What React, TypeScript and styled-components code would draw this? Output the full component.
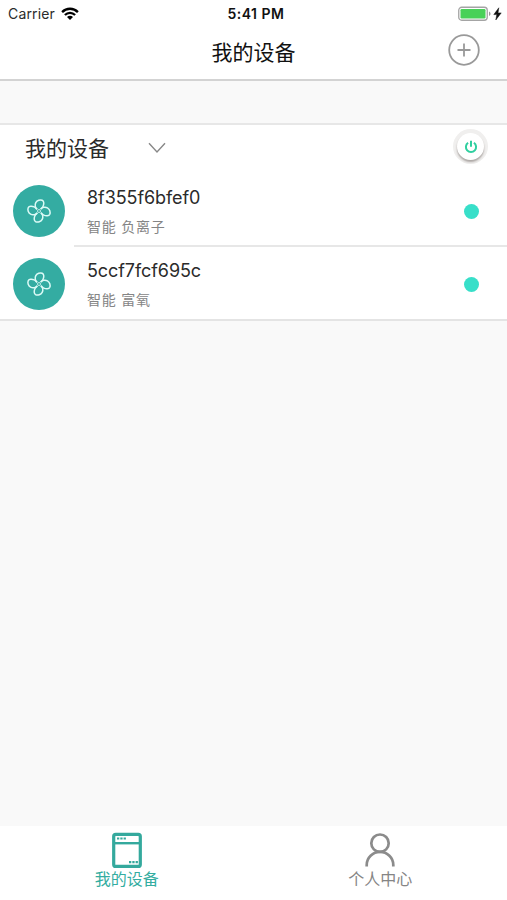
import React from "react";
import styled, { createGlobalStyle } from "styled-components";

const GlobalStyle = createGlobalStyle`
  * { box-sizing: border-box; }
  body {
    margin: 0;
    background: #f9f9f9;
    font-family: Inter, "Noto Sans CJK SC", sans-serif;
    color: #2b2b2b;
  }
`;

const Screen = styled.div`
  width: 100%;
  height: 900px;
  display: flex;
  flex-direction: column;
  background: #f9f9f9;
  overflow: hidden;
`;

const StatusBar = styled.header`
  height: 27px;
  padding: 0 5px 0 8px;
  display: grid;
  grid-template-columns: 1fr auto 1fr;
  align-items: center;
  background: #fff;
`;

const Carrier = styled.div`
  display: flex;
  align-items: center;
  gap: 6px;
  font-size: 14px;
  line-height: 27px;
  letter-spacing: 0.15px;
`;

const Clock = styled.div`
  font-size: 14px;
  font-weight: 600;
  line-height: 27px;
  letter-spacing: 0.5px;
  padding-left: 2px;
  color: #111;
`;

const Power = styled.div`
  display: flex;
  align-items: center;
  justify-content: flex-end;
  gap: 2px;
`;

const NavBar = styled.nav`
  height: 54px;
  display: grid;
  grid-template-columns: 60px 1fr 60px;
  align-items: center;
  background: #fff;
  border-bottom: 2px solid #d3d3d3;
`;

const Title = styled.h1`
  grid-column: 2;
  margin: 0;
  text-align: center;
  font-size: 21px;
  font-weight: 400;
  line-height: 50px;
  color: #111;
`;

const IconButton = styled.button`
  width: 34px;
  height: 34px;
  padding: 0;
  border: 0;
  background: none;
  display: flex;
  margin-bottom: 6px;
`;

const Group = styled.section`
  margin-top: 42px;
  background: #fff;
  border-top: 2px solid #e7e7e7;
  border-bottom: 2px solid #e4e4e4;
`;

const GroupHeader = styled.div`
  height: 48px;
  padding: 0 22px 0 25px;
  display: flex;
  align-items: center;

  > svg { margin-bottom: 2px; }
`;

const GroupName = styled.h2`
  margin: 0 39px 0 0;
  font-size: 21px;
  line-height: 46px;
  font-weight: 400;
`;

const PowerButton = styled.button`
  width: 27px;
  height: 27px;
  margin: 0 1px 5px auto;
  padding: 0;
  border: 0;
  border-radius: 50%;
  background: #fff;
  display: flex;
  align-items: center;
  justify-content: center;
  box-shadow: 0 2px 2px rgba(90, 80, 75, 0.45), 0 0 0 4px #f0efee;
`;

const DeviceRow = styled.div`
  height: 73px;
  padding-left: 13px;
  display: flex;
  align-items: stretch;
`;

const Avatar = styled.div`
  flex: none;
  width: 52px;
  height: 52px;
  margin: 12px 9px 0 0;
  border-radius: 50%;
  background: #34aca2;
  display: flex;
  align-items: center;
  justify-content: center;
`;

const DeviceBody = styled.div<{ $divided: boolean }>`
  flex: 1;
  display: flex;
  align-items: flex-start;
  padding: 0 28px 0 13px;
  border-bottom: ${(p) => (p.$divided ? "2px solid #e7e7e7" : "0")};
  margin-bottom: ${(p) => (p.$divided ? "-1px" : "0")};
`;

const DeviceText = styled.div`
  flex: 1;
`;

const DeviceName = styled.div`
  padding-top: 12px;
  font-size: 18px;
  line-height: 25px;
  letter-spacing: -0.08px;
`;

const DeviceKind = styled.div`
  margin-top: 6px;
  font-size: 14px;
  line-height: 22px;
  letter-spacing: 0.75px;
  color: #858585;
`;

const OnlineDot = styled.span`
  width: 15px;
  height: 15px;
  margin-top: 30.5px;
  border-radius: 50%;
  background: #38dfc9;
`;

const TabBar = styled.footer`
  height: 74px;
  margin-top: auto;
  display: grid;
  grid-template-columns: 1fr 1fr;
  background: #fff;
`;

const Tab = styled.div<{ $active?: boolean }>`
  display: flex;
  flex-direction: column;
  align-items: center;
  padding-top: 6px;
  font-size: 16px;
  line-height: 20px;
  color: ${(p) => (p.$active ? "#34ada1" : "#858585")};

  svg { display: block; margin-bottom: 1px; }
`;

const WifiIcon = () => (
  <svg width="18" height="14" viewBox="0 0 18 14" fill="none" stroke="#000" strokeWidth="2.3">
    <path d="M1.1 5.1C5.5.6 12.5.6 16.9 5.1M3.9 8C6.8 5.1 11.2 5.1 14.1 8" />
    <path d="M6 10C7.7 8.3 10.3 8.3 12 10L9 13z" fill="#000" stroke="none" />
  </svg>
);

const BatteryIcon = () => (
  <svg width="33" height="16" viewBox="0 0 33 16">
    <rect x="0.75" y="1.25" width="28.5" height="13" rx="3" fill="#fff" stroke="#a4a4a4" strokeWidth="1.3" />
    <rect x="2.5" y="3" width="25" height="9.5" rx="1.2" fill="#48d158" />
    <path d="M31 5.5c2 .8 2 3.7 0 4.5z" fill="#999" />
  </svg>
);

const BoltIcon = () => (
  <svg width="9" height="14" viewBox="0 0 9 14">
    <path d="M5.8.8.8 7.6h3L2.8 13 8.2 5.9H5z" fill="#111" stroke="#111" strokeWidth="0.5" />
  </svg>
);

const AddIcon = () => (
  <svg width="34" height="34" viewBox="0 0 34 34" fill="none" stroke="#999" strokeWidth="1.8">
    <circle cx="17" cy="17" r="14.8" />
    <path d="M10.5 17h13M17 10.5v13" />
  </svg>
);

const ChevronIcon = () => (
  <svg width="18" height="12" viewBox="0 0 18 12" fill="none" stroke="#888" strokeWidth="1.4">
    <path d="M1 1.3 9 10l8-8.7" />
  </svg>
);

const PowerIcon = () => (
  <svg width="14" height="14" viewBox="0 0 14 14" fill="none" stroke="#2fcf9f" strokeWidth="2">
    <path d="M4.1 2.8a5.1 5.1 0 1 0 5.8 0M7 .7v6.1" />
  </svg>
);

const FanIcon = () => (
  <svg width="26" height="26" viewBox="-13 -13 26 26" fill="none" stroke="#dcfaf6" strokeWidth="1.5" strokeLinejoin="round">
    {[0, 90, 180, 270].map((angle) => (
      <path key={angle} transform={`rotate(${angle})`} d="M-1.8-1.8C-3.8-3-4.4-6.2-3.2-8.4C-1.9-10.8 1.2-11.6 3.2-10.8C5.3-9.9 5-6.8 4.1-4.8C3.5-3.4 2.6-2.6 1.6-2" />
    ))}
    <circle r="1.5" strokeWidth="0.8" />
  </svg>
);

const DeviceTabIcon = () => (
  <svg width="30" height="36" viewBox="0 0 30 36" fill="none" stroke="#34a99d" strokeWidth="3.2">
    <rect x="1.7" y="2.4" width="26.6" height="32" rx="2" />
    <path d="M2 11.2h26" strokeWidth="2.4" />
    <path d="M5 6.5h9M17 30.2h9" strokeWidth="2.2" strokeDasharray="2.3 1" />
  </svg>
);

const PersonIcon = () => (
  <svg width="30" height="36" viewBox="0 0 30 36" fill="none" stroke="#8b8b8b" strokeWidth="2.7">
    <circle cx="15" cy="11.2" r="8.7" />
    <path d="M1.7 34.6V33a13.3 13.1 0 0 1 26.6 0v1.6" />
  </svg>
);

const devices = [
  { name: "8f355f6bfef0", kind: "智能 负离子" },
  { name: "5ccf7fcf695c", kind: "智能 富氧" },
];

export default function App() {
  return (
    <>
      <GlobalStyle />
      <Screen>
        <StatusBar>
          <Carrier>Carrier <WifiIcon /></Carrier>
          <Clock>5:41 PM</Clock>
          <Power><BatteryIcon /><BoltIcon /></Power>
        </StatusBar>
        <NavBar>
          <Title>我的设备</Title>
          <IconButton aria-label="添加"><AddIcon /></IconButton>
        </NavBar>
        <Group>
          <GroupHeader>
            <GroupName>我的设备</GroupName>
            <ChevronIcon />
            <PowerButton aria-label="电源"><PowerIcon /></PowerButton>
          </GroupHeader>
          {devices.map((device, i) => (
            <DeviceRow key={device.name}>
              <Avatar><FanIcon /></Avatar>
              <DeviceBody $divided={i < devices.length - 1}>
                <DeviceText>
                  <DeviceName>{device.name}</DeviceName>
                  <DeviceKind>{device.kind}</DeviceKind>
                </DeviceText>
                <OnlineDot />
              </DeviceBody>
            </DeviceRow>
          ))}
        </Group>
        <TabBar>
          <Tab $active><DeviceTabIcon />我的设备</Tab>
          <Tab><PersonIcon />个人中心</Tab>
        </TabBar>
      </Screen>
    </>
  );
}
